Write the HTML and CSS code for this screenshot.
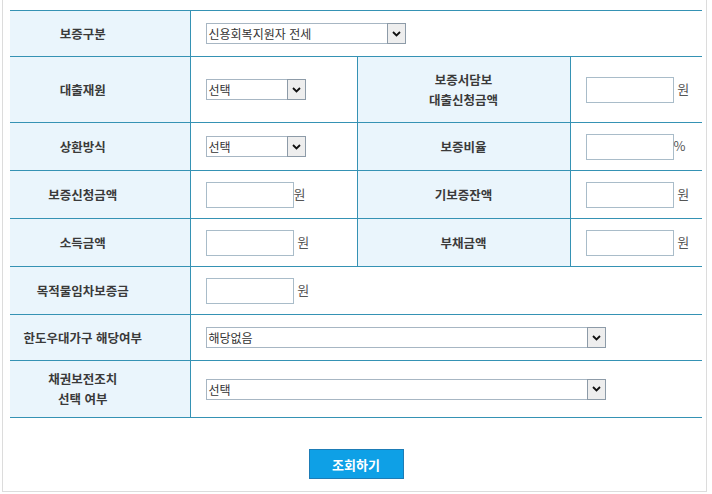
FILE: index.html
```html
<!DOCTYPE html>
<html lang="ko">
<head>
    <meta charset="UTF-8">
    <title>보증 조회</title>
    <link rel="stylesheet" href="styles.css">
</head>
<body>
    <div class="wrap">
        <table class="guarantee-table">
            <colgroup>
                <col class="c1"><col class="c2"><col class="c3"><col class="c4">
            </colgroup>
            <tr class="r46">
                <th>보증구분</th>
                <td colspan="3">
                    <div class="select w200">
                        <span class="select-text">신용회복지원자 전세</span>
                        <span class="select-arrow"><svg width="9" height="6" viewBox="0 0 9 6"><path d="M1 1l3.5 3.5L8 1" fill="none" stroke="#111" stroke-width="1.8"/></svg></span>
                    </div>
                </td>
            </tr>
            <tr class="r66">
                <th>대출재원</th>
                <td>
                    <div class="select w100">
                        <span class="select-text">선택</span>
                        <span class="select-arrow"><svg width="9" height="6" viewBox="0 0 9 6"><path d="M1 1l3.5 3.5L8 1" fill="none" stroke="#111" stroke-width="1.8"/></svg></span>
                    </div>
                </td>
                <th>보증서담보<br>대출신청금액</th>
                <td><input type="text" class="amount"> 원</td>
            </tr>
            <tr class="r48">
                <th>상환방식</th>
                <td>
                    <div class="select w100">
                        <span class="select-text">선택</span>
                        <span class="select-arrow"><svg width="9" height="6" viewBox="0 0 9 6"><path d="M1 1l3.5 3.5L8 1" fill="none" stroke="#111" stroke-width="1.8"/></svg></span>
                    </div>
                </td>
                <th>보증비율</th>
                <td><input type="text" class="amount">%</td>
            </tr>
            <tr class="r48">
                <th>보증신청금액</th>
                <td><input type="text" class="amount">원</td>
                <th>기보증잔액</th>
                <td><input type="text" class="amount"> 원</td>
            </tr>
            <tr class="r48">
                <th>소득금액</th>
                <td><input type="text" class="amount"> 원</td>
                <th>부채금액</th>
                <td><input type="text" class="amount"> 원</td>
            </tr>
            <tr class="r48">
                <th>목적물임차보증금</th>
                <td colspan="3"><input type="text" class="amount"> 원</td>
            </tr>
            <tr class="r46">
                <th>한도우대가구 해당여부</th>
                <td colspan="3">
                    <div class="select w400">
                        <span class="select-text">해당없음</span>
                        <span class="select-arrow"><svg width="9" height="6" viewBox="0 0 9 6"><path d="M1 1l3.5 3.5L8 1" fill="none" stroke="#111" stroke-width="1.8"/></svg></span>
                    </div>
                </td>
            </tr>
            <tr class="r57">
                <th>채권보전조치<br>선택 여부</th>
                <td colspan="3">
                    <div class="select w400">
                        <span class="select-text">선택</span>
                        <span class="select-arrow"><svg width="9" height="6" viewBox="0 0 9 6"><path d="M1 1l3.5 3.5L8 1" fill="none" stroke="#111" stroke-width="1.8"/></svg></span>
                    </div>
                </td>
            </tr>
        </table>

        <div class="actions">
            <button type="button" class="btn-search">조회하기</button>
        </div>
    </div>
</body>
</html>
```

FILE: styles.css
```css
* {
    box-sizing: border-box;
    margin: 0;
    padding: 0;
}

body {
    font-family: "Noto Sans CJK KR", "Noto Sans", sans-serif;
    font-size: 12px;
    color: #444;
    background-color: #fff;
}

.wrap {
    margin-left: 2px;
    width: 705px;
    height: 492px;
    padding: 10px 4px 0 7px;
    border: 1px solid #dcdcdc;
    border-top: none;
}

.guarantee-table {
    width: 692px;
    border-collapse: collapse;
    table-layout: fixed;
}

.c1 { width: 180px; }
.c2 { width: 167px; }
.c3 { width: 213px; }
.c4 { width: 132px; }

.guarantee-table th,
.guarantee-table td {
    border-top: 1px solid #3592b4;
    border-bottom: 1px solid #3592b4;
    border-left: 1px solid #3592b4;
    padding: 0;
}

.guarantee-table tr > :first-child {
    border-left: none;
    padding-right: 34px;
}

.guarantee-table th {
    background-color: #eaf5fc;
    font-size: 12.5px;
    font-weight: bold;
    color: #3a3a3a;
    line-height: 20px;
    text-align: center;
}

.guarantee-table td {
    padding-left: 15px;
    font-size: 13px;
    color: #555;
}

.r46 th, .r46 td { height: 46px; }
.r48 th, .r48 td { height: 48px; }
.r57 th, .r57 td { height: 57px; }
.r66 th, .r66 td { height: 66px; }

.select {
    display: flex;
    align-items: stretch;
    height: 21px;
    border: 1px solid #a7b6c3;
    background-color: #fff;
}

.w100 { width: 100px; }
.w200 { width: 200px; }
.w400 { width: 400px; }

.select-text {
    flex: 1;
    padding-left: 2px;
    font-size: 12px;
    line-height: 19px;
    color: #333;
}

.select-arrow {
    display: flex;
    align-items: center;
    justify-content: center;
    width: 19px;
    margin: -1px -1px -1px 0;
    border: 1px solid #8d9ba8;
    background-color: #eeeeee;
}

.amount {
    width: 88px;
    height: 26px;
    border: 1px solid #a9bcc9;
    vertical-align: middle;
    background-color: #fff;
}

.actions {
    margin-top: 31px;
    text-align: center;
}

.btn-search {
    width: 95px;
    height: 30px;
    border: 1px solid #1d7cb6;
    background-color: #0ea0e6;
    color: #fff;
    font-family: "Noto Sans CJK KR", sans-serif;
    font-size: 13px;
    font-weight: bold;
    cursor: pointer;
}
```
